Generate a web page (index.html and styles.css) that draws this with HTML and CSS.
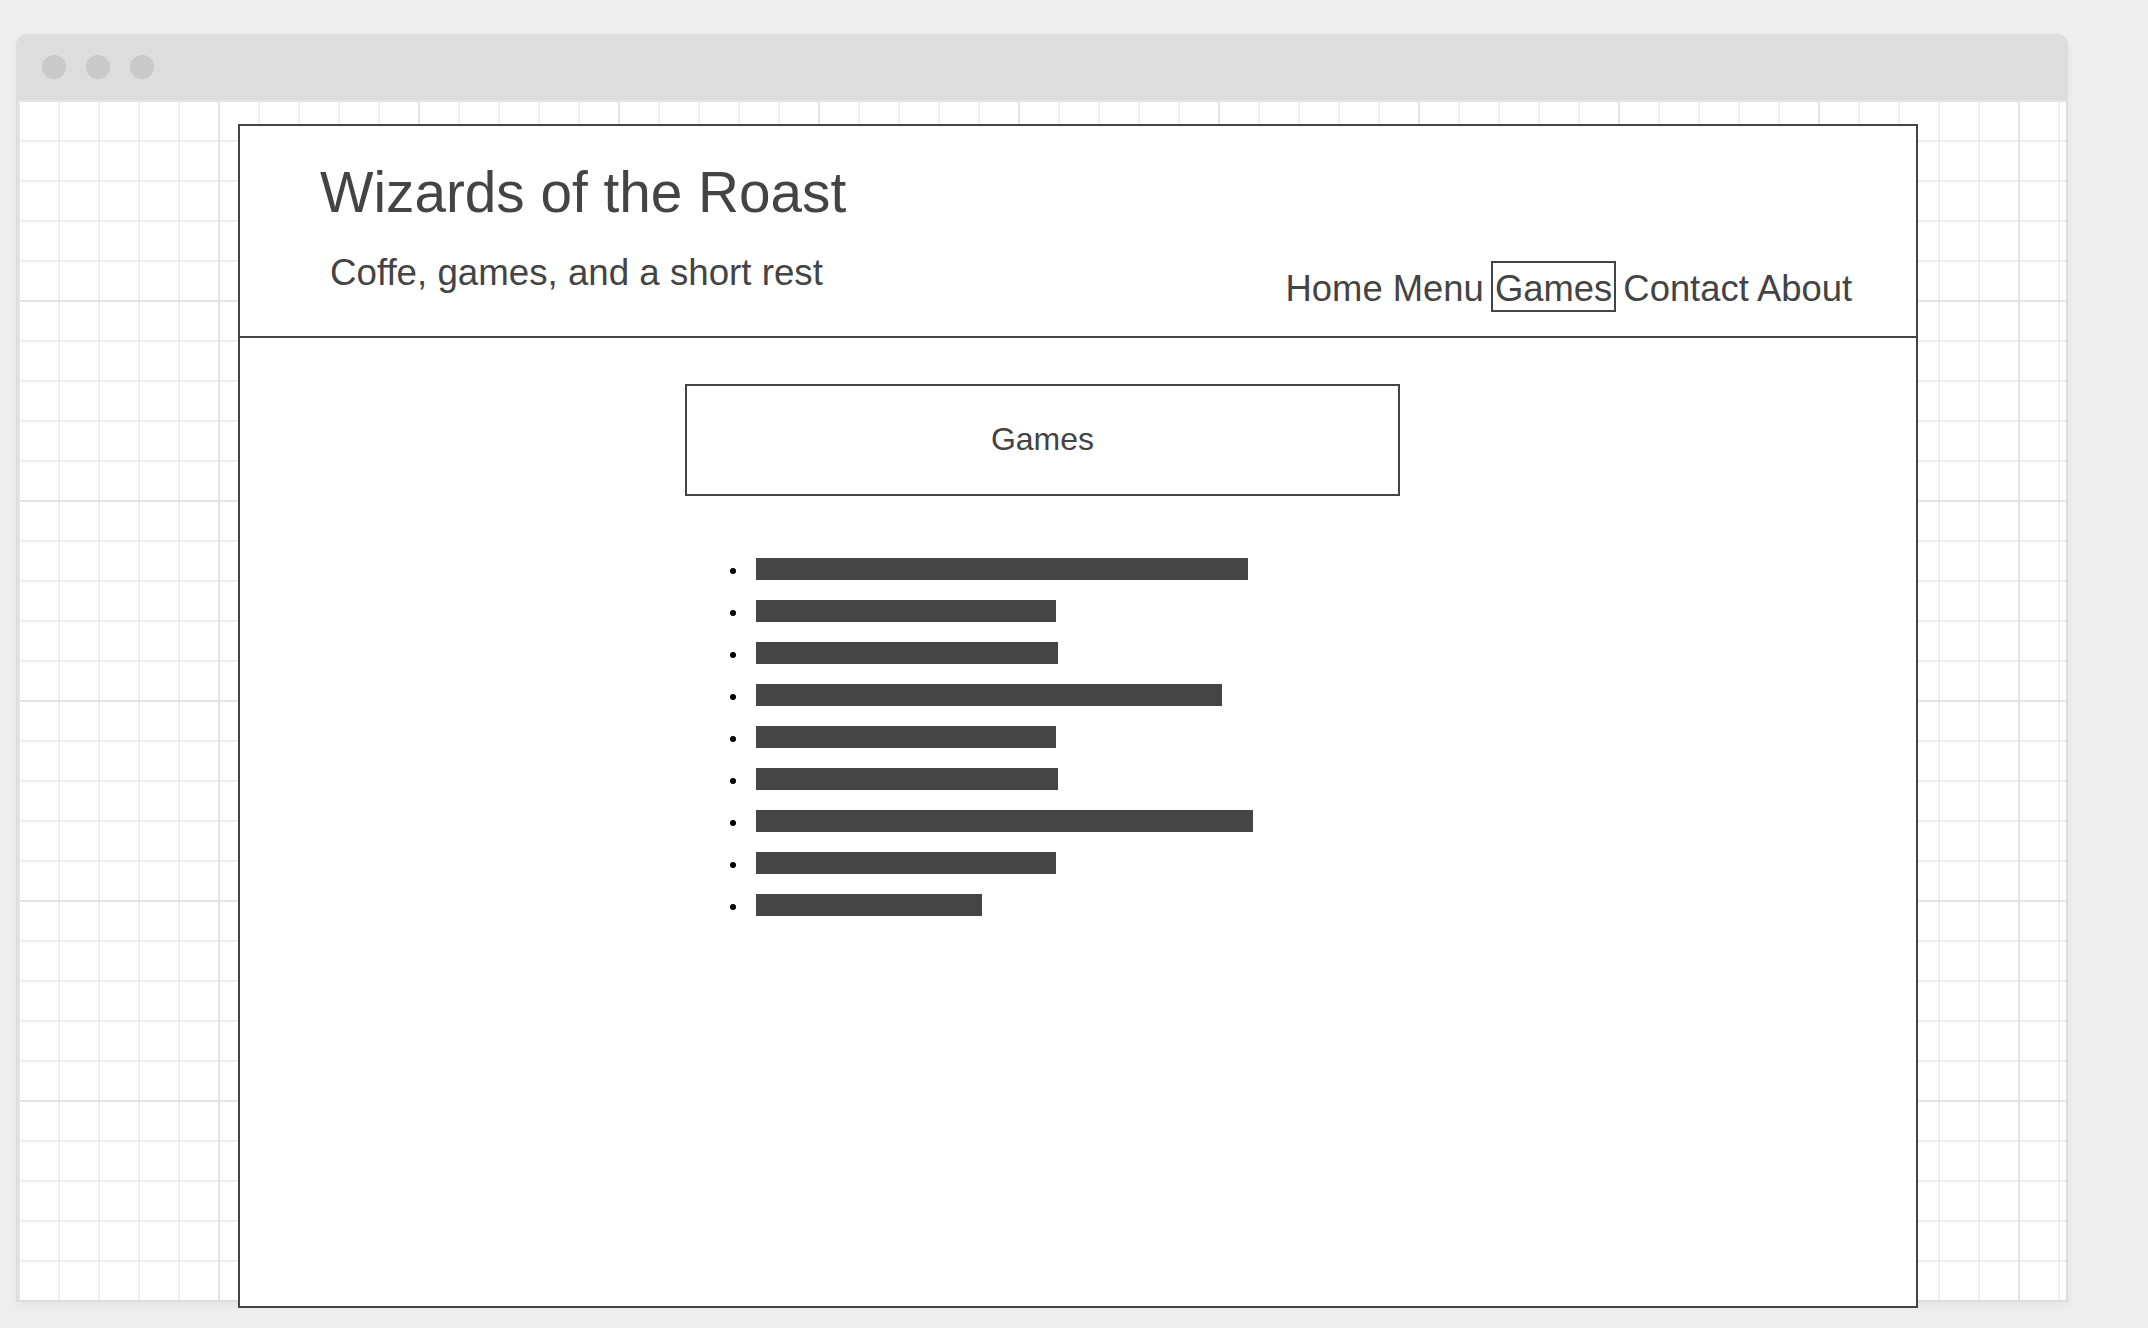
FILE: index.html
```html
<!DOCTYPE html>
<html lang="en">
<head>
<meta charset="utf-8">
<title>Wizards of the Roast</title>
<link rel="stylesheet" href="styles.css">
</head>
<body>
<div class="window">
  <div class="titlebar">
    <span class="dot"></span><span class="dot"></span><span class="dot"></span>
  </div>
  <div class="viewport">
    <div class="frame">
      <header class="site-header">
        <div class="brand">
          <h1 class="site-title">Wizards of the Roast</h1>
          <p class="tagline">Coffe, games, and a short rest</p>
        </div>
        <nav class="nav"><a href="#">Home</a> <a href="#">Menu</a> <a href="#" class="active">Games</a> <a href="#">Contact</a> <a href="#">About</a></nav>
      </header>
      <main class="content">
        <div class="page-heading">Games</div>
        <ul class="game-list">
          <li><span class="bar" style="width:492px"></span></li>
          <li><span class="bar" style="width:300px"></span></li>
          <li><span class="bar" style="width:302px"></span></li>
          <li><span class="bar" style="width:466px"></span></li>
          <li><span class="bar" style="width:300px"></span></li>
          <li><span class="bar" style="width:302px"></span></li>
          <li><span class="bar" style="width:497px"></span></li>
          <li><span class="bar" style="width:300px"></span></li>
          <li><span class="bar" style="width:226px"></span></li>
        </ul>
      </main>
    </div>
  </div>
</div>
</body>
</html>
```
FILE: styles.css
```css
* { box-sizing: border-box; }

html, body {
  margin: 0;
  padding: 0;
}

body {
  background: #eeeeee;
  font-family: "Liberation Sans", Arial, sans-serif;
  color: #444444;
  height: 1328px;
  overflow: hidden;
}

.window {
  margin: 34px 0 0 16px;
  width: 2052px;
  box-shadow: 0 4px 10px rgba(0, 0, 0, 0.04);
  border-radius: 10px 10px 0 0;
}

.titlebar {
  height: 66px;
  background: #dddddd;
  border-radius: 10px 10px 0 0;
  display: flex;
  align-items: center;
  gap: 20px;
  padding-left: 26px;
}

.dot {
  width: 24px;
  height: 24px;
  border-radius: 50%;
  background: #cacaca;
}

.viewport {
  height: 1202px;
  border: 2px solid #dddddd;
  border-top: 0;
  background-color: #ffffff;
  background-image:
    linear-gradient(to right, transparent 198px, #e4e4e4 198px),
    linear-gradient(to bottom, transparent 198px, #e4e4e4 198px),
    linear-gradient(to right, transparent 38px, #eeeeee 38px),
    linear-gradient(to bottom, transparent 38px, #eeeeee 38px);
  background-size: 200px 200px, 200px 200px, 40px 40px, 40px 40px;
  background-position: 2px 2px;
  padding: 24px 0 0 220px;
}

.frame {
  width: 1680px;
  height: 1184px;
  border: 2px solid #444444;
  background: #ffffff;
}

.site-header {
  height: 212px;
  border-bottom: 2px solid #444444;
  display: flex;
  justify-content: space-between;
  padding: 35px 64px 0 80px;
}

.site-title {
  margin: 0;
  font-size: 56.7px;
  line-height: 64px;
  font-weight: normal;
}

.tagline {
  margin: 27px 0 0 10px;
  font-size: 36.7px;
  line-height: 41px;
}

.nav {
  align-self: flex-end;
  margin-bottom: 24px;
  font-size: 36.4px;
  white-space: nowrap;
}

.nav a {
  color: #444444;
  text-decoration: none;
}

.nav a.active {
  display: inline-block;
  border: 2px solid #444444;
  padding: 5px 2px 0;
  margin: 0 -3px;
}

.content {
  padding: 46px 0 0 445px;
}

.page-heading {
  width: 715px;
  height: 112px;
  border: 2px solid #444444;
  display: flex;
  align-items: center;
  justify-content: center;
  font-size: 32px;
  padding-bottom: 1px;
}

.game-list {
  list-style: none;
  margin: 52px 0 0 45px;
  padding: 0;
}

.game-list li {
  height: 42px;
  display: flex;
  align-items: center;
}

.game-list li::before {
  content: "";
  width: 6px;
  height: 6px;
  border-radius: 50%;
  background: #000000;
  margin: 3px 20px 0 0;
}

.bar {
  display: block;
  height: 22px;
  background: #454545;
}
```
